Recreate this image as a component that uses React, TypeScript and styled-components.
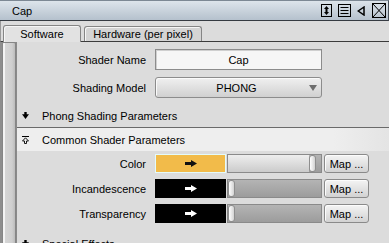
import React from "react";
import styled, { createGlobalStyle } from "styled-components";

const GlobalStyle = createGlobalStyle`
  html, body {
    margin: 0;
    padding: 0;
    background: #dcdcdc;
  }
  body {
    font-family: "Liberation Sans", Arial, sans-serif;
    font-size: 10.5px;
    color: #000;
  }
`;

const Window = styled.div`
  width: 389px;
  height: 243px;
  overflow: hidden;
  background: #dcdcdc;
  display: flex;
  flex-direction: column;
`;

const TitleBar = styled.div`
  flex: none;
  height: 21px;
  box-sizing: border-box;
  border-top: 1px solid #7d8894;
  border-right: 1px solid #4a525c;
  border-bottom: 1px solid #363b42;
  background: linear-gradient(#dde4eb, #b5c1cd);
  display: flex;
  align-items: center;
  justify-content: space-between;
  padding: 0 2px 0 12px;
`;

const Title = styled.span`
  font-size: 11px;
`;

const TitleIcons = styled.div`
  display: flex;
  align-items: center;
  gap: 6px;
`;

const IconBox = styled.svg<{ $push?: number }>`
  display: block;
  margin-left: ${(p) => p.$push ?? 0}px;
`;

const TabStrip = styled.div`
  flex: none;
  height: 21px;
  box-sizing: border-box;
  padding: 4px 0 0 2px;
  border-bottom: 1px solid #3c3c3c;
  border-left: 1px solid #9a9a9a;
  display: flex;
  align-items: flex-end;
  gap: 3px;
`;

const Tab = styled.div<{ $active?: boolean }>`
  box-sizing: border-box;
  height: ${(p) => (p.$active ? 17 : 15)}px;
  margin-bottom: ${(p) => (p.$active ? -1 : 0)}px;
  width: ${(p) => (p.$active ? 78 : 118)}px;
  border: 1px solid #858585;
  border-bottom: none;
  border-radius: 3px 3px 0 0;
  box-shadow: inset 1px 1px 0 #f6f6f6;
  background: ${(p) => (p.$active ? "#e2e2e2" : "#d4d4d4")};
  display: flex;
  align-items: center;
  justify-content: center;
  font-size: 11px;
  padding-bottom: ${(p) => (p.$active ? 1 : 0)}px;
`;

const Body = styled.div`
  flex: 1;
  display: flex;
  min-height: 0;
`;

const ScrollTrack = styled.div`
  flex: none;
  width: 16px;
  box-sizing: border-box;
  padding-left: 2px;
  background: #8e8e8e;
  display: flex;
`;

const ScrollThumb = styled.div`
  flex: 1;
  border: 1px solid #868686;
  border-bottom: none;
  border-radius: 2px 2px 0 0;
  background: linear-gradient(
    to right,
    #f4f4f4 0,
    #f4f4f4 2px,
    #d6d6d6 2px,
    #cfcfcf 9px,
    #bcbcbc 100%
  );
`;

const Content = styled.div`
  flex: 1;
  display: flex;
  flex-direction: column;
  border-left: 1px solid #8a8a8a;
  padding-top: 7px;
`;

const FieldRow = styled.div<{ $gap?: number }>`
  display: flex;
  align-items: center;
  height: 21px;
  margin-top: ${(p) => p.$gap ?? 0}px;
`;

const Label = styled.span`
  width: 129px;
  margin-right: 9px;
  text-align: right;
  font-size: 11px;
  white-space: nowrap;
`;

const TextInput = styled.div`
  width: 167px;
  height: 21px;
  box-sizing: border-box;
  border: 1px solid #8c8c8c;
  background: #f6f6f6;
  box-shadow: inset 1px 1px 0 #cfcfcf;
  display: flex;
  align-items: center;
  justify-content: center;
  font-size: 11px;
`;

const Dropdown = styled.div`
  width: 167px;
  height: 21px;
  box-sizing: border-box;
  border: 1px solid #8c8c8c;
  border-radius: 3px;
  background: linear-gradient(#f0f0f0, #d0d0d0);
  box-shadow: inset 1px 1px 0 #fafafa;
  display: flex;
  align-items: center;
  padding: 0 4px 0 0;
  font-size: 11px;
`;

const DropdownText = styled.span`
  flex: 1;
  text-align: center;
  padding-left: 8px;
`;

const SectionHeader = styled.div<{ $open?: boolean; $gap?: number }>`
  height: 23px;
  flex: none;
  display: flex;
  align-items: center;
  padding-left: 5px;
  margin-top: ${(p) => p.$gap ?? 0}px;
  font-size: 11px;
  border-top: ${(p) => (p.$open ? "1px solid #6a6a6a" : "none")};
  background: ${(p) =>
    p.$open ? "linear-gradient(to right, #eeeeee 85%, #e4e4e4)" : "transparent"};
`;

const HeaderIcon = styled.svg`
  display: block;
  flex: none;
  margin-right: 13px;
`;

const AttrRow = styled.div<{ $gap: number }>`
  display: flex;
  align-items: center;
  height: 19px;
  margin-top: ${(p) => p.$gap}px;
`;

const Swatch = styled.div<{ $color: string; $selected?: boolean }>`
  width: 71px;
  height: 19px;
  box-sizing: border-box;
  background: ${(p) => p.$color};
  border: 1px solid ${(p) => (p.$selected ? "#e4fbfb" : p.$color)};
  display: flex;
  align-items: center;
  justify-content: center;
`;

const Slider = styled.div`
  width: 95px;
  height: 19px;
  margin-left: 1px;
  box-sizing: border-box;
  border: 1px solid #8a8a8a;
  display: flex;
  background: linear-gradient(#b4b4b4, #9c9c9c);
`;

const SliderFill = styled.div`
  flex: none;
  background: linear-gradient(#eeeeee, #cbcbcb);
`;

const SliderThumb = styled.div`
  flex: none;
  width: 7px;
  box-sizing: border-box;
  border: 1px solid #8e8e8e;
  border-radius: 3px;
  background: linear-gradient(to right, #ffffff, #d2d2d2);
`;

const MapButton = styled.div`
  width: 45px;
  height: 19px;
  margin-left: 2px;
  box-sizing: border-box;
  border: 1px solid #8a8a8a;
  border-radius: 3px;
  background: linear-gradient(#f4f4f4, #d2d2d2);
  box-shadow: inset 1px 1px 0 #fcfcfc;
  display: flex;
  align-items: center;
  justify-content: center;
  font-size: 11px;
`;

const DownArrow = () => (
  <HeaderIcon width="7" height="7" viewBox="0 0 7 7">
    <polygon points="2.3,0 4.7,0 4.7,2.3 7,2.3 3.5,7 0,2.3 2.3,2.3" fill="#000" />
  </HeaderIcon>
);

const CollapseIcon = () => (
  <HeaderIcon width="7" height="8" viewBox="0 0 7 8">
    <line x1="0" y1="0.5" x2="7" y2="0.5" stroke="#000" />
    <polygon
      points="3.5,1.8 6.5,5 4.5,5 4.5,7.5 2.5,7.5 2.5,5 0.5,5"
      fill="none"
      stroke="#000"
      strokeWidth="0.9"
    />
  </HeaderIcon>
);

const SwatchArrow = ({ color }: { color: string }) => (
  <svg width="12" height="7" viewBox="0 0 12 7" style={{ display: "block" }}>
    <polygon points="0,2 6,2 6,0 12,3.5 6,7 6,5 0,5" fill={color} />
  </svg>
);

const attrs = [
  { name: "Color", color: "#f2bb4a", arrow: "#111", value: 81, selected: true },
  { name: "Incandescence", color: "#000", arrow: "#fff", value: 0 },
  { name: "Transparency", color: "#000", arrow: "#fff", value: 0 },
];

export default function App() {
  return (
    <Window>
      <GlobalStyle />
      <TitleBar>
        <Title>Cap</Title>
        <TitleIcons>
          <IconBox width="11" height="13" viewBox="0 0 11 13">
            <rect x="0.5" y="0.5" width="10" height="12" fill="none" stroke="#000" />
            <polygon points="5.5,2 8,5 3,5" fill="#000" />
            <polygon points="5.5,11 8,8 3,8" fill="#000" />
            <rect x="4.5" y="4" width="2" height="5" fill="#000" />
          </IconBox>
          <IconBox width="13" height="13" viewBox="0 0 13 13">
            <rect x="0.5" y="0.5" width="12" height="12" fill="none" stroke="#000" />
            <line x1="2.5" y1="3.5" x2="10.5" y2="3.5" stroke="#000" />
            <line x1="2.5" y1="6.5" x2="10.5" y2="6.5" stroke="#000" />
            <line x1="2.5" y1="9.5" x2="10.5" y2="9.5" stroke="#000" />
          </IconBox>
          <IconBox width="8" height="10" viewBox="0 0 8 10">
            <polygon points="7,1 1.2,5 7,9" fill="none" stroke="#000" strokeWidth="1.5" />
          </IconBox>
          <IconBox $push={1} width="14" height="15" viewBox="0 0 14 15">
            <rect x="0.5" y="0.5" width="13" height="14" fill="none" stroke="#000" />
            <line x1="1" y1="1" x2="13" y2="14" stroke="#000" />
            <line x1="13" y1="1" x2="1" y2="14" stroke="#000" />
          </IconBox>
        </TitleIcons>
      </TitleBar>

      <TabStrip>
        <Tab $active>Software</Tab>
        <Tab>Hardware (per pixel)</Tab>
      </TabStrip>

      <Body>
        <ScrollTrack>
          <ScrollThumb />
        </ScrollTrack>
        <Content>
          <FieldRow>
            <Label>Shader Name</Label>
            <TextInput>Cap</TextInput>
          </FieldRow>
          <FieldRow $gap={7}>
            <Label>Shading Model</Label>
            <Dropdown>
              <DropdownText>PHONG</DropdownText>
              <svg width="8" height="6" viewBox="0 0 8 6" style={{ display: "block" }}>
                <polygon points="0,0 8,0 4,6" fill="#6e6e6e" />
              </svg>
            </Dropdown>
          </FieldRow>

          <SectionHeader $gap={6}>
            <DownArrow />
            Phong Shading Parameters
          </SectionHeader>
          <SectionHeader $open>
            <CollapseIcon />
            Common Shader Parameters
          </SectionHeader>

          {attrs.map((a, i) => (
            <AttrRow key={a.name} $gap={i === 0 ? 3 : 6}>
              <Label>{a.name}</Label>
              <Swatch $color={a.color} $selected={a.selected}>
                <SwatchArrow color={a.arrow} />
              </Swatch>
              <Slider>
                <SliderFill style={{ width: a.value }} />
                <SliderThumb />
              </Slider>
              <MapButton>Map ...</MapButton>
            </AttrRow>
          ))}

          <SectionHeader $gap={9}>
            <DownArrow />
            Special Effects
          </SectionHeader>
        </Content>
      </Body>
    </Window>
  );
}
